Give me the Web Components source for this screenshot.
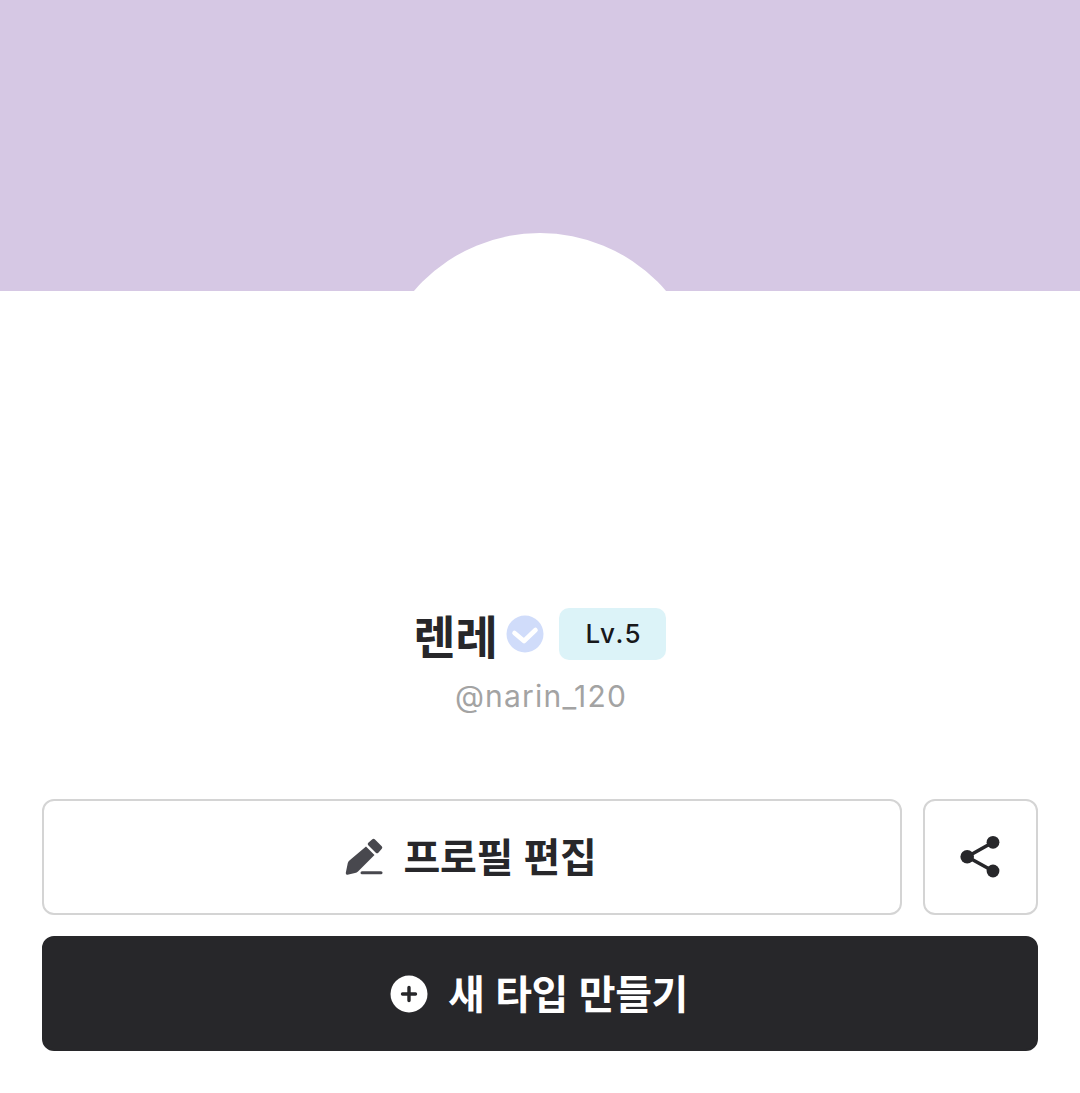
<!DOCTYPE html>
<html lang="ko">
<head>
<meta charset="utf-8">
<title>Profile</title>
<style>
    html, body { margin: 0; background: #fff; }
    body { font-family: "Inter", "Noto Sans CJK KR", sans-serif; color: #27272a; }
</style>
</head>
<body>
<profile-page>
    <profile-cover></profile-cover>
    <profile-name name="렌레" handle="@narin_120" level="Lv.5"></profile-name>
    <profile-actions></profile-actions>
</profile-page>

<script>
class ProfilePage extends HTMLElement {
    constructor() {
        super();
        this.attachShadow({ mode: 'open' });
        this.shadowRoot.innerHTML = `
            <style>
                :host {
                    display: block;
                    height: 1093px;
                    overflow: hidden;
                }
            </style>
            <slot></slot>
        `;
    }
}

class ProfileCover extends HTMLElement {
    constructor() {
        super();
        this.attachShadow({ mode: 'open' });
        this.shadowRoot.innerHTML = `
            <style>
                :host {
                    display: block;
                    position: relative;
                    height: 291px;
                    background: #d6c8e4;
                    overflow: hidden;
                }
                .avatar {
                    position: absolute;
                    left: 50%;
                    top: 233px;
                    width: 332px;
                    height: 332px;
                    margin-left: -166px;
                    border-radius: 50%;
                    background: #fff;
                }
            </style>
            <div class="avatar"></div>
        `;
    }
}

class ProfileName extends HTMLElement {
    constructor() {
        super();
        this.attachShadow({ mode: 'open' });
    }

    connectedCallback() {
        const name = this.getAttribute('name');
        const handle = this.getAttribute('handle');
        const level = this.getAttribute('level');
        this.shadowRoot.innerHTML = `
            <style>
                :host {
                    display: flex;
                    flex-direction: column;
                    align-items: center;
                    padding-top: 317px;
                }
                .row {
                    display: flex;
                    align-items: center;
                    height: 52px;
                    padding-right: 1px;
                }
                .name {
                    font: 700 46px/52px "Noto Sans CJK KR", sans-serif;
                    color: #27272a;
                }
                svg {
                    display: block;
                    width: 38px;
                    height: 38px;
                    margin: 0 15px 0 8px;
                }
                .level {
                    display: flex;
                    align-items: center;
                    justify-content: center;
                    box-sizing: border-box;
                    width: 107px;
                    height: 52px;
                    padding-left: 3px;
                    border-radius: 10px;
                    background: #dcf3f8;
                    font: 500 26px/1 "Inter", sans-serif;
                    letter-spacing: 1.6px;
                    color: #18181b;
                }
                .handle {
                    margin-top: 17px;
                    padding-left: 2px;
                    font: 400 30px/38px "Inter", sans-serif;
                    letter-spacing: 1.2px;
                    color: #a3a3a3;
                }
            </style>
            <div class="row">
                <span class="name">${name}</span>
                <svg viewBox="0 0 38 38">
                    <circle cx="19" cy="19" r="18.5" fill="#d0dcfa"/>
                    <path d="M8.5 18 L18 26 L29.5 15" fill="none" stroke="#fff" stroke-width="4.6" stroke-linecap="round" stroke-linejoin="round"/>
                </svg>
                <span class="level">${level}</span>
            </div>
            <div class="handle">${handle}</div>
        `;
    }
}

class ProfileButton extends HTMLElement {
    constructor() {
        super();
        this.attachShadow({ mode: 'open' });
        this.shadowRoot.innerHTML = `
            <style>
                :host {
                    display: flex;
                    align-items: center;
                    justify-content: center;
                    gap: 20px;
                    box-sizing: border-box;
                    height: 116px;
                    padding-right: 4px;
                    border: 2px solid #d4d4d4;
                    border-radius: 12px;
                    background: #fff;
                    color: #27272a;
                    font: 700 40px/1 "Noto Sans CJK KR", sans-serif;
                    letter-spacing: -0.4px;
                }
                :host([dark]) {
                    height: 115px;
                    padding-right: 2px;
                    border-color: #27272a;
                    background: #27272a;
                    color: #fff;
                }
                :host([icon-only]) { padding-right: 0; }
                ::slotted(span) { padding-bottom: 4px; }
            </style>
            <slot></slot>
        `;
    }
}

class ProfileActions extends HTMLElement {
    constructor() {
        super();
        this.attachShadow({ mode: 'open' });
        this.shadowRoot.innerHTML = `
            <style>
                :host {
                    display: grid;
                    grid-template-columns: 1fr 115px;
                    gap: 21px;
                    margin-top: 84px;
                    padding: 0 42px;
                }
                .wide { grid-column: 1 / -1; }
                svg { display: block; flex: none; }
            </style>
            <profile-button>
                <svg width="40" height="40" viewBox="0 0 40 40">
                    <path d="M29.5 3.5 L36.5 10.5 L33 14.5 L25.5 7 Z" fill="#48484e" stroke="#48484e" stroke-width="3.5" stroke-linejoin="round"/>
                    <path d="M22 9.5 L30.5 18 L14 34.5 Q12.8 35.5 11 36 L3.5 37.8 Q1.4 38 1.8 35.8 L3.8 26 Q4.4 24 6 23 L22 9.5 Z" fill="#48484e"/>
                    <rect x="16.5" y="34.2" width="22" height="3" rx="1.5" fill="#48484e"/>
                </svg>
                <span>프로필 편집</span>
            </profile-button>
            <profile-button icon-only>
                <svg width="42" height="44" viewBox="0 0 42 44">
                    <path d="M7.2 21.7 L33 7.3 M7.2 21.7 L33 36" fill="none" stroke="#27272a" stroke-width="3.6"/>
                    <circle cx="7.2" cy="21.7" r="6.8" fill="#27272a"/>
                    <circle cx="33" cy="7.3" r="6.4" fill="#27272a"/>
                    <circle cx="33" cy="36" r="6.4" fill="#27272a"/>
                </svg>
            </profile-button>
            <profile-button dark class="wide">
                <svg width="38" height="38" viewBox="0 0 38 38">
                    <circle cx="19" cy="19" r="18.5" fill="#fff"/>
                    <path d="M19 12.5 V25.5 M12.5 19 H25.5" fill="none" stroke="#27272a" stroke-width="3.4" stroke-linecap="round"/>
                </svg>
                <span>새 타입 만들기</span>
            </profile-button>
        `;
    }
}

customElements.define('profile-page', ProfilePage);
customElements.define('profile-cover', ProfileCover);
customElements.define('profile-name', ProfileName);
customElements.define('profile-button', ProfileButton);
customElements.define('profile-actions', ProfileActions);
</script>
</body>
</html>
